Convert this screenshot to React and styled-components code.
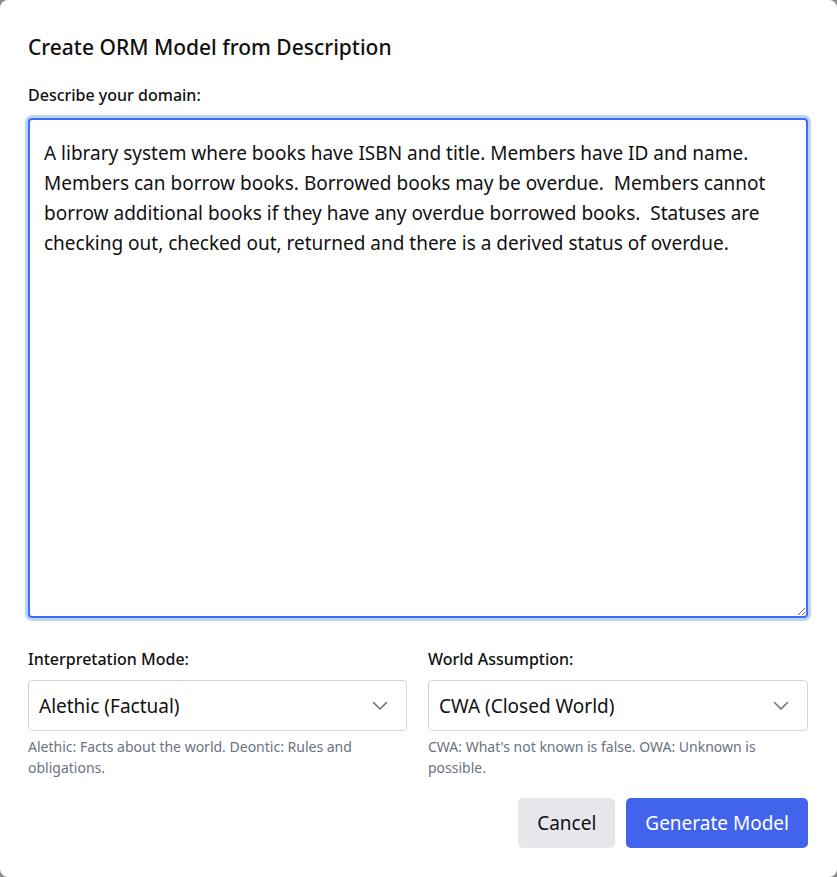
import React from 'react';
import styled, { createGlobalStyle } from 'styled-components';

const GlobalStyle = createGlobalStyle`
  html, body {
    margin: 0;
    padding: 0;
    background: #8a8a8a;
  }
  * {
    box-sizing: border-box;
  }
`;

const description =
  'A library system where books have ISBN and title. Members have ID and name. Members can borrow books. Borrowed books may be overdue.  Members cannot borrow additional books if they have any overdue borrowed books.  Statuses are checking out, checked out, returned and there is a derived status of overdue.';

function Chevron() {
  return (
    <svg width="20" height="20" viewBox="0 0 20 20" fill="none">
      <path d="M3.5 6.5L10 13l6.5-6.5" stroke="#6b7280" strokeWidth="1.6" strokeLinecap="round" strokeLinejoin="round" />
    </svg>
  );
}

function SelectField({ label, value, hint }) {
  return (
    <Field>
      <Label>{label}</Label>
      <SelectBox>
        <span>{value}</span>
        <Chevron />
      </SelectBox>
      <Hint>{hint}</Hint>
    </Field>
  );
}

export default function App() {
  return (
    <>
      <GlobalStyle />
      <Dialog>
        <Title>Create ORM Model from Description</Title>
        <Label>Describe your domain:</Label>
        <TextArea defaultValue={description} />
        <Row>
          <SelectField
            label="Interpretation Mode:"
            value="Alethic (Factual)"
            hint="Alethic: Facts about the world. Deontic: Rules and obligations."
          />
          <SelectField
            label="World Assumption:"
            value="CWA (Closed World)"
            hint="CWA: What's not known is false. OWA: Unknown is possible."
          />
        </Row>
        <Actions>
          <Button>Cancel</Button>
          <Button primary>Generate Model</Button>
        </Actions>
      </Dialog>
    </>
  );
}

const Dialog = styled.div`
  width: 837px;
  height: 877px;
  background: #fff;
  border-radius: 8px;
  padding: 33px 29px 29px 28px;
  display: flex;
  flex-direction: column;
  font-family: "Noto Sans", "Open Sans", sans-serif;
  color: #111;
`;

const Title = styled.h2`
  margin: 0 0 24px;
  font-size: 21px;
  font-weight: 500;
  line-height: 28px;
`;

const Label = styled.div`
  font-size: 16px;
  font-weight: 500;
  line-height: 20px;
  margin-bottom: 10px;
`;

const TextArea = styled.textarea`
  flex-shrink: 0;
  width: 780px;
  height: 500px;
  margin-top: 3px;
  border: 2px solid #3b6ff0;
  border-radius: 4px;
  box-shadow: 0 0 0 3px #bfd3fb;
  outline: none;
  padding: 18px 14px;
  font-family: "Noto Sans", "Open Sans", sans-serif;
  font-size: 19px;
  line-height: 30px;
  color: #111;
  resize: both;
`;

const Row = styled.div`
  display: grid;
  grid-template-columns: 379px 380px;
  gap: 21px;
  margin-top: 31px;
`;

const Field = styled.div`
  display: flex;
  flex-direction: column;
`;

const SelectBox = styled.div`
  height: 51px;
  border: 1px solid #d1d5db;
  border-radius: 4px;
  display: flex;
  align-items: center;
  justify-content: space-between;
  padding: 0 16px 0 10px;
  font-size: 19px;
  color: #111;
  margin-top: 1px;
`;

const Hint = styled.div`
  margin-top: 5px;
  font-size: 14px;
  line-height: 21px;
  color: #6b7280;
`;

const Actions = styled.div`
  display: flex;
  justify-content: flex-end;
  gap: 11px;
  margin-top: auto;
`;

const Button = styled.button`
  height: 50px;
  padding: 0 19px;
  border: none;
  border-radius: 5px;
  font-family: "Noto Sans", "Open Sans", sans-serif;
  font-size: 19px;
  background: ${p => (p.primary ? '#4263eb' : '#e5e7eb')};
  color: ${p => (p.primary ? '#fff' : '#111')};
`;
